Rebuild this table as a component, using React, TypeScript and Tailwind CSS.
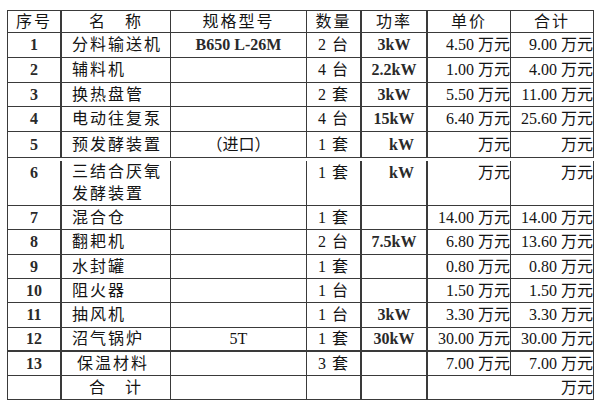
import React from 'react';

type Row = {
  no: string;
  name: React.ReactNode;
  spec?: string;
  qty: string;
  power?: string;
  powerRight?: boolean;
  price: string;
  total: string;
  h: string;
  top?: boolean;
  nameClass?: string;
};

const rows: Row[] = [
  { no: '1', name: '分料输送机', spec: 'B650 L-26M', qty: '2 台', power: '3kW', price: '4.50 万元', total: '9.00 万元', h: 'h-[25px]' },
  { no: '2', name: '辅料机', qty: '4 台', power: '2.2kW', price: '1.00 万元', total: '4.00 万元', h: 'h-[25px]' },
  { no: '3', name: '换热盘管', qty: '2 套', power: '3kW', price: '5.50 万元', total: '11.00 万元', h: 'h-[24px]' },
  { no: '4', name: '电动往复泵', qty: '4 台', power: '15kW', price: '6.40 万元', total: '25.60 万元', h: 'h-[25px]' },
  { no: '5', name: '预发酵装置', spec: '（进口）', qty: '1 套', power: 'kW', powerRight: true, price: '万元', total: '万元', h: 'h-[26px]' },
  {
    no: '6',
    name: (
      <>
        三结合厌氧
        <br />
        发酵装置
      </>
    ),
    qty: '1 套',
    power: 'kW',
    powerRight: true,
    price: '万元',
    total: '万元',
    h: 'h-[48px]',
    top: true,
  },
  { no: '7', name: '混合仓', qty: '1 套', price: '14.00 万元', total: '14.00 万元', h: 'h-[24px]' },
  { no: '8', name: '翻耙机', qty: '2 台', power: '7.5kW', price: '6.80 万元', total: '13.60 万元', h: 'h-[25px]' },
  { no: '9', name: '水封罐', qty: '1 套', price: '0.80 万元', total: '0.80 万元', h: 'h-[24px]' },
  { no: '10', name: '阻火器', qty: '1 台', price: '1.50 万元', total: '1.50 万元', h: 'h-[24px]' },
  { no: '11', name: '抽风机', qty: '1 台', power: '3kW', price: '3.30 万元', total: '3.30 万元', h: 'h-[25px]' },
  { no: '12', name: '沼气锅炉', spec: '5T', qty: '1 套', power: '30kW', price: '30.00 万元', total: '30.00 万元', h: 'h-[24px]' },
  { no: '13', name: '保温材料', qty: '3 套', price: '7.00 万元', total: '7.00 万元', h: 'h-[24px]', nameClass: 'pl-[15px]' },
];

const line = 'border-[#3a3a3a]';

export default function App() {
  return (
    <div className="w-[600px] h-[410px] bg-white pt-[10px] pl-[7px] text-[16px] text-[#141414] font-['Liberation_Serif','Noto_Sans_CJK_SC',serif]">
      <div className={`w-[587px] border-l border-t ${line}`}>
        {/* header */}
        <div className={`flex h-[22px] border-b ${line} leading-[21px]`}>
          <div className={`w-[54px] border-r-2 ${line} text-center tracking-[2px]`}>序号</div>
          <div className={`w-[109px] border-r ${line} text-center tracking-[2px]`}>名　称</div>
          <div className={`w-[136px] border-r ${line} text-center tracking-[2px]`}>规格型号</div>
          <div className={`w-[55px] border-r-2 ${line} text-center tracking-[2px]`}>数量</div>
          <div className={`w-[66px] border-r-2 ${line} text-center tracking-[2px]`}>功率</div>
          <div className={`w-[83px] border-r ${line} text-center tracking-[2px]`}>单价</div>
          <div className={`w-[83px] border-r ${line} text-center tracking-[2px]`}>合计</div>
        </div>

        {rows.map((r) => (
          <div
            key={r.no}
            className={`flex ${r.h} ${r.no === '12' ? 'border-b-2' : 'border-b'} ${line} ${r.top ? 'items-start pt-[3px]' : 'items-center'}`}
          >
            <div className={`w-[54px] self-stretch border-r-2 ${line} text-center font-bold text-[#2a2a2a] ${r.top ? '' : 'flex items-center justify-center'}`}>{r.no}</div>
            <div className={`w-[109px] self-stretch border-r ${line} pl-[10px] tracking-[2px] ${r.top ? 'leading-[22px]' : 'flex items-center'} ${r.nameClass ?? ''}`}>{r.name}</div>
            <div className={`w-[136px] self-stretch border-r ${line} flex items-center justify-center ${r.spec && r.spec.startsWith('B') ? 'font-bold text-[#2a2a2a]' : ''}`}>{r.spec}</div>
            <div className={`w-[55px] self-stretch border-r-2 ${line} text-center tracking-[1px] ${r.top ? '' : 'flex items-center justify-center'}`}>{r.qty}</div>
            <div className={`w-[66px] self-stretch border-r-2 ${line} font-bold text-[#2a2a2a] ${r.powerRight ? 'text-right pr-[12px]' : 'text-center'} ${r.top ? '' : 'flex items-center ' + (r.powerRight ? 'justify-end' : 'justify-center')}`}>{r.power}</div>
            <div className={`w-[83px] self-stretch border-r ${line} text-right whitespace-nowrap ${r.top ? '' : 'flex items-center justify-end'}`}>{r.price}</div>
            <div className={`w-[83px] self-stretch border-r ${line} text-right whitespace-nowrap ${r.top ? '' : 'flex items-center justify-end'}`}>{r.total}</div>
          </div>
        ))}

        {/* total */}
        <div className={`flex h-[24px] border-b ${line}`}>
          <div className={`w-[54px] border-r-2 ${line}`} />
          <div className={`w-[109px] border-r ${line} flex items-center justify-center tracking-[2px]`}>合　计</div>
          <div className={`w-[136px] border-r ${line}`} />
          <div className={`w-[55px] border-r-2 ${line}`} />
          <div className={`w-[66px] border-r-2 ${line}`} />
          <div className={`w-[166px] border-r ${line} flex items-center justify-end`}>万元</div>
        </div>
      </div>
    </div>
  );
}
